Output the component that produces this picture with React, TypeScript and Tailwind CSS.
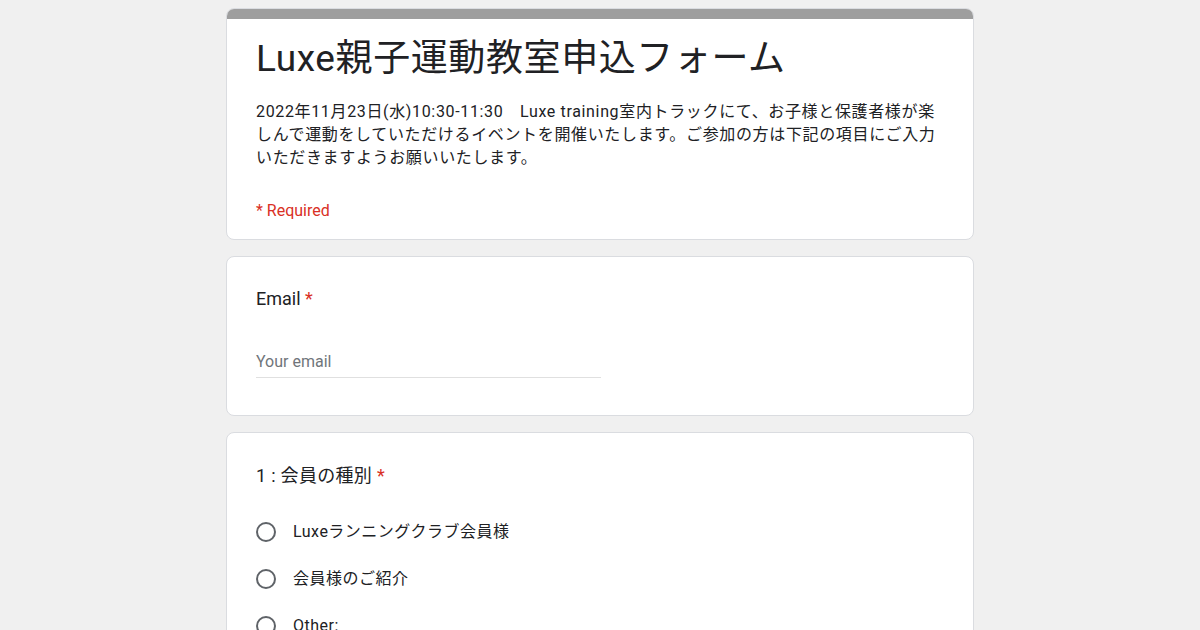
const font = "font-['Roboto','Noto_Sans_CJK_JP',sans-serif]";

function Card({ children, className = "" }: { children: React.ReactNode; className?: string }) {
  return (
    <div className={`overflow-hidden rounded-lg border border-[#dadce0] bg-white ${className}`}>
      {children}
    </div>
  );
}

function Radio({ label }: { label: string }) {
  return (
    <div className="flex h-[47px] items-center">
      <div className="h-5 w-5 shrink-0 rounded-full border-2 border-[#5f6368]" />
      <span className="ml-[17px] text-base tracking-[0.5px] text-[#202124]">{label}</span>
    </div>
  );
}

export default function App() {
  return (
    <div className={`min-h-[630px] bg-[#f0f0f0] pt-2 ${font}`}>
      <div className="mx-auto flex w-[748px] flex-col gap-4">
        <Card>
          <div className="h-[10px] bg-[#9e9e9e]" />
          <div className="px-[29px] pb-[18px] pt-4">
            <h1 className="text-[37px] leading-[48px] tracking-[0.6px] text-[#202124]">Luxe親子運動教室申込フォーム</h1>
            <p className="mt-[17px] text-base leading-[23px] tracking-[0.65px] text-[#202124]">
              2022年11月23日(水)10:30-11:30　Luxe training室内トラックにて、お子様と保護者様が楽
              <br />
              しんで運動をしていただけるイベントを開催いたします。ご参加の方は下記の項目にご入力
              <br />
              いただきますようお願いいたします。
            </p>
            <p className="mt-[32px] text-base leading-5 text-[#d93025]">* Required</p>
          </div>
        </Card>

        <Card>
          <div className="px-[29px] pb-[37px] pt-[30px]">
            <div className="text-lg leading-6 text-[#202124]">
              Email <span className="text-[#d93025]">*</span>
            </div>
            <div className="mt-[41px] w-[345px] border-b border-[#e0e0e0] pb-[5px] text-base leading-5 text-[#70757a]">
              Your email
            </div>
          </div>
        </Card>

        <Card className="pb-10">
          <div className="px-[29px] pt-[31px]">
            <div className="text-lg leading-6 tracking-[0.3px] text-[#202124]">
              1 : 会員の種別 <span className="text-[#d93025]">*</span>
            </div>
            <div className="mt-[20px] flex flex-col">
              <Radio label="Luxeランニングクラブ会員様" />
              <Radio label="会員様のご紹介" />
              <Radio label="Other:" />
            </div>
          </div>
        </Card>
      </div>
    </div>
  );
}
